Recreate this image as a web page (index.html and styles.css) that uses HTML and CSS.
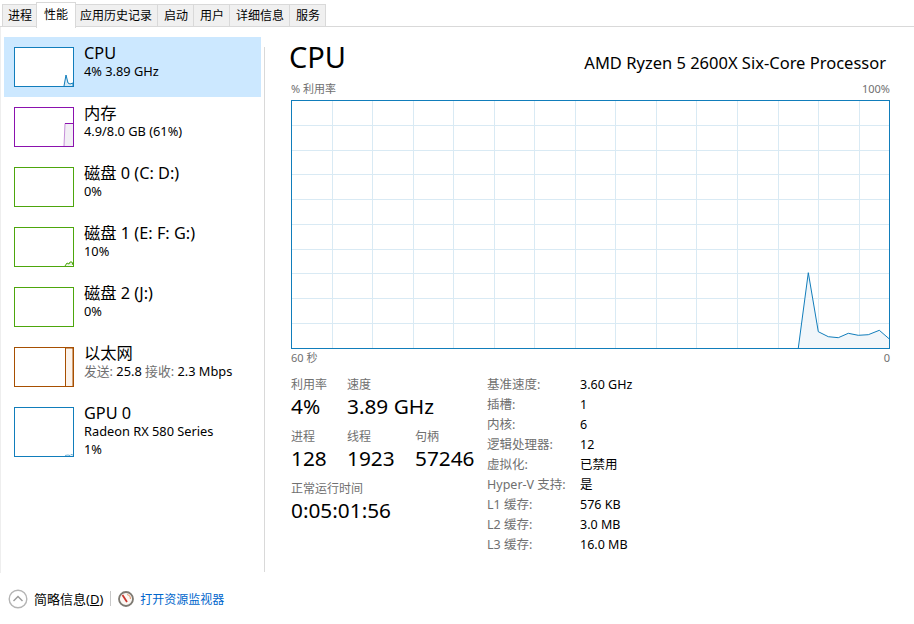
FILE: index.html
```html
<!DOCTYPE html>
<html lang="zh-CN">
<head>
  <meta charset="UTF-8" />
  <title>任务管理器</title>
  <link rel="stylesheet" href="styles.css">
</head>
<body>
  <div class="tabs">
    <div class="tab">进程</div>
    <div class="tab active">性能</div>
    <div class="tab">应用历史记录</div>
    <div class="tab">启动</div>
    <div class="tab">用户</div>
    <div class="tab">详细信息</div>
    <div class="tab">服务</div>
  </div>

  <div class="content">
    <div class="side">
      <div class="item selected">
        <div class="thumb cpu">
          <svg width="58" height="38" viewBox="0 0 58 38"><polyline points="49,38 51,27 53,35 55,36 58,35 58,38" fill="#d9eaf5" stroke="#117dbb"/></svg>
        </div>
        <div class="info">
          <div class="name">CPU</div>
          <div class="val">4% 3.89 GHz</div>
        </div>
      </div>
      <div class="item">
        <div class="thumb mem">
          <svg width="58" height="38" viewBox="0 0 58 38">
            <polygon points="49,38 50,15.500 58,15.500 58,38" fill="#f2eff5"/>
            <path d="M49 38 50 15.500" fill="none" stroke="#c58fd8"/>
            <path d="M50 15.500H58" fill="none" stroke="#8b12ae"/>
          </svg>
        </div>
        <div class="info">
          <div class="name">内存</div>
          <div class="val">4.9/8.0 GB (61%)</div>
        </div>
      </div>
      <div class="item">
        <div class="thumb disk"></div>
        <div class="info">
          <div class="name">磁盘 0 (C: D:)</div>
          <div class="val">0%</div>
        </div>
      </div>
      <div class="item">
        <div class="thumb disk">
          <svg width="58" height="38" viewBox="0 0 58 38"><polyline points="50,38 52,35 54,36 55,34 57,34 58,37" fill="#e6f2dc" stroke="#4da60c"/></svg>
        </div>
        <div class="info">
          <div class="name">磁盘 1 (E: F: G:)</div>
          <div class="val">10%</div>
        </div>
      </div>
      <div class="item">
        <div class="thumb disk"></div>
        <div class="info">
          <div class="name">磁盘 2 (J:)</div>
          <div class="val">0%</div>
        </div>
      </div>
      <div class="item">
        <div class="thumb net">
          <svg width="58" height="38" viewBox="0 0 58 38"><polyline points="50.500,38 50.500,0 58,0 58,38" fill="#fcf3eb" stroke="#a74f01"/></svg>
        </div>
        <div class="info">
          <div class="name">以太网</div>
          <div class="val"><span class="dim">发送:</span> 25.8 <span class="dim">接收:</span> 2.3 Mbps</div>
        </div>
      </div>
      <div class="item tall">
        <div class="thumb gpu">
          <svg width="58" height="48" viewBox="0 0 58 48"><polyline points="50,47.500 53,47 55,47.500 56,46.500 58,47" fill="none" stroke="#117dbb" stroke-opacity=".6"/></svg>
        </div>
        <div class="info">
          <div class="name">GPU 0</div>
          <div class="val">Radeon RX 580 Series</div>
          <div class="val">1%</div>
        </div>
      </div>
    </div>

    <div class="main">
      <div class="head">
        <h1>CPU</h1>
        <div class="model">AMD Ryzen 5 2600X Six-Core Processor</div>
      </div>
      <div class="axis top"><span>% 利用率</span><span>100%</span></div>
      <div class="chart">
        <svg width="597" height="247" viewBox="292 101 597 247">
          <path class="grid" d="M332.500 101V348M372.500 101V348M413.500 101V348M453.500 101V348M494.500 101V348M534.500 101V348M575.500 101V348M615.500 101V348M656.500 101V348M696.500 101V348M737.500 101V348M778.500 101V348M818.500 101V348M859.500 101V348"/>
          <path class="grid" d="M292 125.500H889M292 150.500H889M292 174.500H889M292 199.500H889M292 224.500H889M292 249.500H889M292 273.500H889M292 298.500H889M292 323.500H889"/>
          <polygon class="fill" points="798.300,348 808.300,272.700 818.300,331.700 828.300,336.700 838.300,337.700 848.300,333.300 858.300,335.300 868.300,334.700 879.300,330.300 889,338.700 889,348"/>
          <polyline class="line" points="798.300,348 808.300,272.700 818.300,331.700 828.300,336.700 838.300,337.700 848.300,333.300 858.300,335.300 868.300,334.700 879.300,330.300 889,338.700"/>
        </svg>
      </div>
      <div class="axis bottom"><span>60 秒</span><span>0</span></div>

      <div class="details">
        <div class="stats">
          <div class="stat-row">
            <div class="stat w56"><div class="label">利用率</div><div class="big">4%</div></div>
            <div class="stat"><div class="label">速度</div><div class="big">3.89 GHz</div></div>
          </div>
          <div class="stat-row">
            <div class="stat w56"><div class="label">进程</div><div class="big">128</div></div>
            <div class="stat w68"><div class="label">线程</div><div class="big">1923</div></div>
            <div class="stat"><div class="label">句柄</div><div class="big">57246</div></div>
          </div>
          <div class="stat-row">
            <div class="stat"><div class="label">正常运行时间</div><div class="big">0:05:01:56</div></div>
          </div>
        </div>
        <div class="specs">
          <div class="key">基准速度:</div><div>3.60 GHz</div>
          <div class="key">插槽:</div><div>1</div>
          <div class="key">内核:</div><div>6</div>
          <div class="key">逻辑处理器:</div><div>12</div>
          <div class="key">虚拟化:</div><div>已禁用</div>
          <div class="key">Hyper-V 支持:</div><div>是</div>
          <div class="key">L1 缓存:</div><div>576 KB</div>
          <div class="key">L2 缓存:</div><div>3.0 MB</div>
          <div class="key">L3 缓存:</div><div>16.0 MB</div>
        </div>
      </div>
    </div>
  </div>

  <div class="footer">
    <svg class="less" width="20" height="20" viewBox="0 0 20 20">
      <circle cx="10" cy="10" r="8.800" fill="#fff" stroke="#b4b4b4" stroke-width="1.400"/>
      <path d="M5.500 12 10 7.500 14.500 12" fill="none" stroke="#9a9a9a" stroke-width="1.400"/>
    </svg>
    <span class="less-text">简略信息(<u>D</u>)</span>
    <span class="sep"></span>
    <svg class="gauge" width="16" height="16" viewBox="0 0 16 16">
      <circle cx="8" cy="8" r="7" fill="#fbf7f3" stroke="#7d7972" stroke-width="1.800"/>
      <path d="M9 3.500A4.600 4.600 0 0 1 12.500 8" fill="none" stroke="#e9a27a" stroke-width="1.200"/>
      <path d="M4.500 4 9 11" stroke="#c9342c" stroke-width="1.800"/>
    </svg>
    <span class="link">打开资源监视器</span>
  </div>
</body>
</html>
```

FILE: styles.css
```css
html, body {
  margin: 0;
  height: 624px;
  overflow: hidden;
}

body {
  background: white;
  color: black;
  font-family: "Noto Sans", "Noto Sans CJK SC", sans-serif;
  font-size: 12px;
  display: flex;
  flex-direction: column;
}

.tabs {
  display: flex;
  padding: 4px 0 0 2px;
  height: 22px;
  border-bottom: 1px solid #d9d9d9;
}

.tab {
  padding: 0 5px 0 6px;
  line-height: 21px;
  background: #f0f0f0;
  border: 1px solid #d9d9d9;
  border-bottom: none;
  margin-left: -1px;
  font-size: 12px;
  white-space: nowrap;
}

.tab:first-child {
  margin-left: 0;
  padding: 0 5px;
}

.tab.active {
  background: white;
  height: 25px;
  margin: -2px -2px 0 -2px;
  padding: 0 7px;
  line-height: 24px;
  position: relative;
}

.content {
  display: flex;
  height: 546px;
}

.side {
  width: 264px;
  height: 546px;
  box-sizing: border-box;
  padding: 10px 3px 0 4px;
  border-left: 1px solid #eeeeee;
  flex-shrink: 0;
}

.item {
  display: flex;
  height: 60px;
  box-sizing: border-box;
  padding: 10px 0 0 10px;
  margin-left: -1px;
}

.item.tall {
  height: 70px;
}

.item.selected {
  background: #cce8ff;
}

.thumb {
  width: 58px;
  height: 38px;
  background: white;
  border: 1px solid #117dbb;
  margin-right: 10px;
  flex-shrink: 0;
}

.thumb svg {
  display: block;
}

.tall .thumb {
  height: 48px;
}

.cpu { border-color: #117dbb; }
.mem { border-color: #8b12ae; }
.disk { border-color: #4da60c; }
.net { border-color: #a74f01; }
.gpu { border-color: #117dbb; }

.info {
  margin-top: -3px;
}

.name {
  font-size: 16.300px;
  line-height: 18px;
  white-space: nowrap;
}

.val {
  font-size: 12.800px;
  line-height: 18px;
  white-space: nowrap;
}

.dim {
  color: #707070;
}

.main {
  flex: 1;
  border-left: 1px solid #d9d9d9;
  height: 525px;
  margin-top: 20px;
  padding: 0 25px 0 26px;
  position: relative;
}

.head {
  display: flex;
  justify-content: space-between;
  align-items: flex-end;
  height: 35px;
  margin-top: -8px;
  margin-left: -2px;
}

h1 {
  margin: 0;
  font-size: 29px;
  font-weight: normal;
  line-height: 35px;
}

.model {
  font-size: 16.500px;
  line-height: 22px;
  margin-right: 4px;
}

.axis {
  display: flex;
  justify-content: space-between;
  color: #707070;
  font-size: 11px;
  line-height: 16px;
}

.axis.top {
  margin-top: 7px;
  height: 19px;
}

.axis.bottom {
  height: 22px;
  margin-top: 1px;
}

.chart {
  width: 597px;
  height: 247px;
  border: 1px solid #117dbb;
}

.chart svg {
  display: block;
}

.grid {
  fill: none;
  stroke: #d9eaf4;
  stroke-width: 1;
}

.fill {
  fill: #f1f6fa;
}

.line {
  fill: none;
  stroke: #117dbb;
  stroke-width: 1;
}

.details {
  display: flex;
  margin-top: 4px;
}

.stats {
  width: 196px;
  flex-shrink: 0;
}

.stat-row {
  display: flex;
  height: 52px;
}

.w56 { width: 56px; }
.w68 { width: 68px; }

.label {
  color: #707070;
  font-size: 12px;
  line-height: 18px;
}

.big {
  font-size: 20.800px;
  line-height: 26px;
  margin-top: -1px;
  white-space: nowrap;
}

.specs {
  display: grid;
  grid-template-columns: 93px auto;
  grid-auto-rows: 20px;
  font-size: 12.500px;
  line-height: 20px;
  margin-top: -1px;
  white-space: nowrap;
}

.key {
  color: #707070;
}

.footer {
  height: 52px;
  display: flex;
  align-items: center;
  padding-left: 8px;
  font-size: 12px;
}

.less-text {
  margin-left: 6px;
  font-size: 13px;
}

.sep {
  width: 1px;
  height: 15px;
  background: #c8c8c8;
  margin: 0 7px;
}

.link {
  color: #0066cc;
  margin-left: 6px;
}
```
